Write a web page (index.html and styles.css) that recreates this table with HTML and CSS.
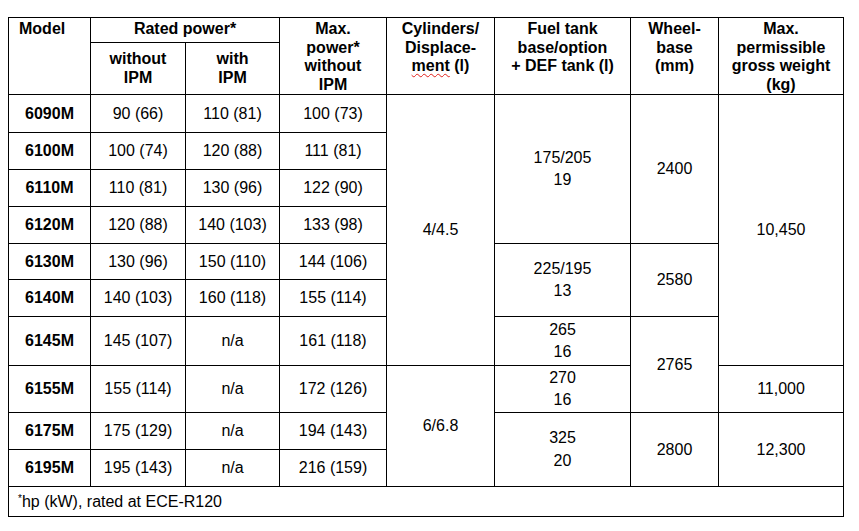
FILE: index.html
```html
<!DOCTYPE html>
<html lang="en">
<head>
<meta charset="utf-8">
<title>Tractor specifications</title>
<link rel="stylesheet" href="styles.css">
</head>
<body>
<table class="spec">
  <colgroup>
    <col class="c-model">
    <col class="c-rated1">
    <col class="c-rated2">
    <col class="c-max">
    <col class="c-cyl">
    <col class="c-fuel">
    <col class="c-wheel">
    <col class="c-weight">
  </colgroup>
  <thead>
    <tr class="h-top">
      <th rowspan="2" class="th-model">Model</th>
      <th colspan="2">Rated power*</th>
      <th rowspan="2">Max.<br>power*<br>without<br>IPM</th>
      <th rowspan="2">Cylinders/<br>Displace-<br><span class="squiggle">ment</span> (l)</th>
      <th rowspan="2">Fuel tank<br>base/option<br>+ DEF tank (l)</th>
      <th rowspan="2">Wheel-<br>base<br>(mm)</th>
      <th rowspan="2">Max.<br>permissible<br>gross weight<br>(kg)</th>
    </tr>
    <tr class="h-sub">
      <th class="th-sub">without<br>IPM</th>
      <th class="th-sub">with<br>IPM</th>
    </tr>
  </thead>
  <tbody>
    <tr class="r38">
      <td class="model">6090M</td><td>90 (66)</td><td>110 (81)</td><td>100 (73)</td>
      <td rowspan="7">4/4.5</td>
      <td rowspan="4" class="fuel-top">175/205<br>19</td>
      <td rowspan="4" class="fuel-top">2400</td>
      <td rowspan="7">10,450</td>
    </tr>
    <tr class="r37">
      <td class="model">6100M</td><td>100 (74)</td><td>120 (88)</td><td>111 (81)</td>
    </tr>
    <tr class="r37">
      <td class="model">6110M</td><td>110 (81)</td><td>130 (96)</td><td>122 (90)</td>
    </tr>
    <tr class="r37">
      <td class="model">6120M</td><td>120 (88)</td><td>140 (103)</td><td>133 (98)</td>
    </tr>
    <tr class="r36">
      <td class="model">6130M</td><td>130 (96)</td><td>150 (110)</td><td>144 (106)</td>
      <td rowspan="2">225/195<br>13</td>
      <td rowspan="2">2580</td>
    </tr>
    <tr class="r37">
      <td class="model">6140M</td><td>140 (103)</td><td>160 (118)</td><td>155 (114)</td>
    </tr>
    <tr class="r49">
      <td class="model">6145M</td><td>145 (107)</td><td>n/a</td><td>161 (118)</td>
      <td>265<br>16</td>
      <td rowspan="2">2765</td>
    </tr>
    <tr class="r47">
      <td class="model">6155M</td><td>155 (114)</td><td>n/a</td><td>172 (126)</td>
      <td rowspan="3">6/6.8</td>
      <td>270<br>16</td>
      <td>11,000</td>
    </tr>
    <tr class="r37">
      <td class="model">6175M</td><td>175 (129)</td><td>n/a</td><td>194 (143)</td>
      <td rowspan="2">325<br>20</td>
      <td rowspan="2">2800</td>
      <td rowspan="2">12,300</td>
    </tr>
    <tr class="r37">
      <td class="model">6195M</td><td>195 (143)</td><td>n/a</td><td>216 (159)</td>
    </tr>
    <tr class="r30">
      <td colspan="8" class="note"><sup>*</sup>hp (kW), rated at ECE-R120</td>
    </tr>
  </tbody>
</table>
</body>
</html>
```
FILE: styles.css
```css
html, body {
  margin: 0;
  padding: 0;
  background: #ffffff;
}

body {
  padding: 17px 0 0 8px;
  font-family: "Liberation Sans", Arial, sans-serif;
  font-size: 16px;
  color: #000000;
}

.spec {
  border-collapse: collapse;
  table-layout: fixed;
  width: 836px;
}

.c-model { width: 82px; }
.c-rated1 { width: 95px; }
.c-rated2 { width: 94px; }
.c-max { width: 107px; }
.c-cyl { width: 108px; }
.c-fuel { width: 136px; }
.c-wheel { width: 88px; }
.c-weight { width: 125px; }

.spec th,
.spec td {
  border: 1px solid #000000;
  padding: 0 4px;
  text-align: center;
}

.spec th {
  font-weight: bold;
  line-height: 18.6px;
  vertical-align: top;
  padding-top: 2px;
}

.spec .th-model {
  text-align: left;
  padding-left: 10px;
}

.spec .th-sub {
  vertical-align: middle;
  padding-top: 0;
}

.h-top { height: 25px; }
.h-sub { height: 52px; }

.spec td {
  line-height: 22.5px;
  vertical-align: middle;
}

.spec td.model {
  font-weight: bold;
}

.spec td.note {
  text-align: left;
  padding-left: 9px;
  line-height: 18px;
}

.note sup {
  font-size: 10px;
  vertical-align: 5px;
  line-height: 0;
}

.squiggle {
  text-decoration: underline wavy #e0201a;
  text-decoration-thickness: 1px;
  text-underline-offset: 2px;
  text-decoration-skip-ink: none;
}

.r30 { height: 30px; }
.r36 { height: 36px; }
.r37 { height: 37px; }
.r38 { height: 38px; }
.r47 { height: 47px; }
.r49 { height: 49px; }
```
